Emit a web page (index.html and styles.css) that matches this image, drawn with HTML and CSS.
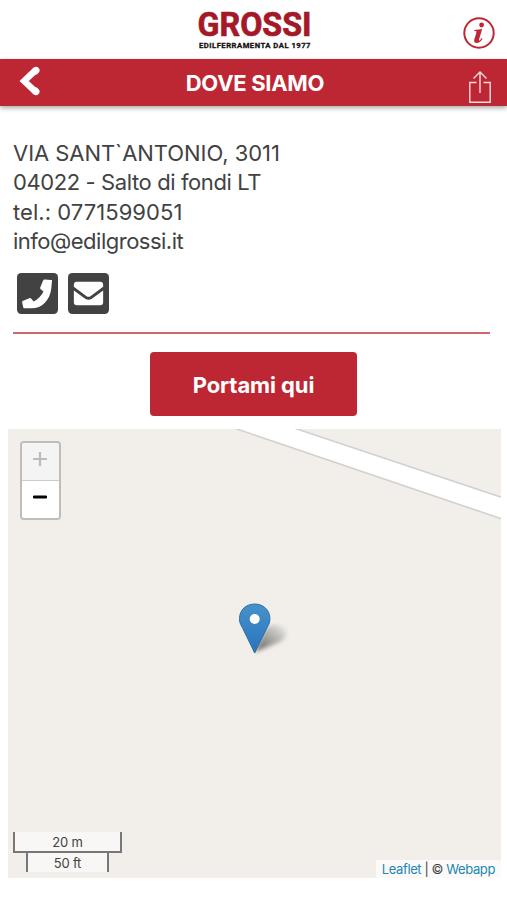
FILE: index.html
```html
<!DOCTYPE html>
<html lang="it">
<head>
    <meta charset="UTF-8">
    <meta name="viewport" content="width=device-width, initial-scale=1.0">
    <title>Dove siamo</title>
    <link rel="stylesheet" href="styles.css">
</head>
<body>
    <header class="header">
        <svg class="logo" width="120" height="56" viewBox="0 0 120 56">
            <text class="logo-name" x="3.5" y="36" textLength="114" lengthAdjust="spacingAndGlyphs">GROSSI</text>
            <text class="logo-sub" x="5" y="47.7" textLength="112" lengthAdjust="spacingAndGlyphs">EDILFERRAMENTA DAL 1977</text>
        </svg>
        <a class="info" href="#">
            <svg width="32" height="32" viewBox="0 0 32 32">
                <circle cx="16" cy="16" r="14.7" fill="none" stroke="#bd2733" stroke-width="2"/>
                <circle cx="18.6" cy="8" r="2.4" fill="#bd2733"/>
                <path d="M11.4 12.9L19.2 12L16 22.5Q15.6 24 16.8 23.3Q17.8 22.6 18.8 21L19.6 21.7Q16.7 26 13.7 26Q10.5 25.9 11.3 22.4L13.4 15.4Q13.8 14.1 12.5 14.1L11.2 14.1Z" fill="#bd2733"/>
            </svg>
        </a>
    </header>
    <nav class="bar">
        <a class="back" href="#">
            <svg width="24" height="32" viewBox="0 0 24 32">
                <path d="M17.9 4.9L6.2 16L17.9 27.1" fill="none" stroke="#fff" stroke-width="6.4" stroke-linejoin="miter"/>
                <path d="M18 5.4L17 6.3M18 26.6L17 25.7" stroke="#fff" stroke-width="7" stroke-linecap="round"/>
            </svg>
        </a>
        <h1 class="title">DOVE SIAMO</h1>
        <a class="share" href="#">
            <svg width="24" height="34" viewBox="0 0 24 34">
                <path d="M8.5 12.5H1.8V32.2H22.2V12.5H15.5M12 23V2M5.5 8.5L12 2L18.5 8.5" fill="none" stroke="#f9dcdc" stroke-width="1.4"/>
            </svg>
        </a>
    </nav>
    <main class="content">
        <address class="address">
            <span class="street">VIA SANT`ANTONIO, 3011</span>
            <span class="city">04022 - Salto di fondi LT</span>
            <span class="tel">tel.: 0771599051</span>
            <span class="mail">info@edilgrossi.it</span>
        </address>
        <div class="contacts">
            <a href="#">
                <svg width="41" height="41" viewBox="0 0 448 448">
                    <rect width="448" height="448" rx="46" fill="#424242"/>
                    <path d="M383 80L375 166C361 295 273 386 160 386L88 386C76 386 70 382 68 373L57 325C55 315 58 309 68 304L135 276C143 272 151 275 156 281L182 312C227 290 269 248 290 203L259 177C253 171 251 164 255 156L284 84C288 74 295 69 304 70L371 76C379 76 384 75 383 80Z" fill="#fff"/>
                </svg>
            </a>
            <a href="#">
                <svg width="41" height="41" viewBox="0 0 448 448">
                    <rect width="448" height="448" rx="46" fill="#424242"/>
                    <path d="M96 96H352Q384 96 384 128V151L245 253Q224 268 203 253L64 151V128Q64 96 96 96ZM64 190L188 281Q224 304 260 281L384 190V320Q384 352 352 352H96Q64 352 64 320Z" fill="#fff"/>
                </svg>
            </a>
        </div>
        <hr class="line">
        <a class="button" href="#">Portami qui</a>
    </main>
    <div class="map">
        <svg class="tiles" width="493" height="449" viewBox="0 0 493 449">
            <path d="M226 -1L494 90V68L286 -1Z" fill="#fff"/>
            <path d="M226 -1Q310 27 494 90M286 -1L494 68.5" fill="none" stroke="#d2d1cf" stroke-width="1.6"/>
        </svg>
        <svg class="marker" width="54" height="54" viewBox="0 0 54 54">
            <defs>
                <linearGradient id="pin" x1="0" y1="0" x2="0" y2="1">
                    <stop offset="0" stop-color="#4693cb"/>
                    <stop offset="1" stop-color="#2873bd"/>
                </linearGradient>
                <linearGradient id="shade" x1="0" y1="1" x2="1" y2="0">
                    <stop offset="0" stop-color="#000" stop-opacity=".6"/>
                    <stop offset="1" stop-color="#000" stop-opacity="0"/>
                </linearGradient>
                <filter id="soft" x="-30%" y="-30%" width="160%" height="160%">
                    <feGaussianBlur stdDeviation="2"/>
                </filter>
            </defs>
            <path d="M17 50L27 27Q37 19 46 26Q52 33 42 40Z" fill="url(#shade)" filter="url(#soft)"/>
            <path d="M16.7 51L4.3 25.5C1.5 21 1.5 18.5 1.5 16.5C1.5 8 8.2 2 16.7 2S31.9 8 31.9 16.5C31.9 18.5 31.9 21 29.1 25.5Z" fill="url(#pin)" stroke="#2d70a4" stroke-width="1"/>
            <circle cx="16.7" cy="17" r="5" fill="#fff"/>
        </svg>
        <div class="zoom">
            <a class="zoom-in" href="#">
                <svg width="14" height="14" viewBox="0 0 14 14"><path d="M0 7H14M7 0V14" stroke="#bbb" stroke-width="2.2"/></svg>
            </a>
            <a class="zoom-out" href="#">
                <svg width="14" height="14" viewBox="0 0 14 14"><path d="M1 7H13" stroke="#000" stroke-width="2.8" stroke-linecap="round"/></svg>
            </a>
        </div>
        <div class="scale">
            <div class="scale-line metric">20 m</div>
            <div class="scale-line imperial">50 ft</div>
        </div>
        <div class="attribution"><a href="#">Leaflet</a> | © <a href="#">Webapp</a></div>
    </div>
</body>
</html>
```
FILE: styles.css
```css
* {
    box-sizing: border-box;
}
body {
    margin: 0;
    background: #fff;
    color: #424242;
    font-family: Inter, "Liberation Sans", sans-serif;
}
a {
    text-decoration: none;
}
svg {
    display: block;
}
.header {
    height: 59px;
    padding: 0 12px;
    display: grid;
    grid-template-columns: 32px 1fr 32px;
}
.logo {
    grid-column: 2;
    justify-self: center;
}
.logo-name {
    font-family: Roboto, sans-serif;
    font-size: 34px;
    font-weight: bold;
    fill: #a51827;
    stroke: #a51827;
    stroke-width: 0.7px;
}
.logo-sub {
    font-family: Roboto, sans-serif;
    font-size: 7.8px;
    font-weight: bold;
    letter-spacing: 0.5px;
    fill: #111;
    stroke: #111;
    stroke-width: 0.3px;
}
.info {
    margin-top: 17px;
}
.bar {
    height: 47px;
    padding: 0 15px 0 18px;
    display: grid;
    grid-template-columns: 24px 1fr 24px;
    align-items: center;
    background: #bd2733;
    box-shadow: 0 2px 5px rgba(0, 0, 0, 0.35);
}
.back {
    margin-top: -5px;
}
.share {
    margin-top: 6px;
}
.title {
    margin: 0;
    color: #fff;
    font-size: 22px;
    font-weight: 700;
    letter-spacing: -0.3px;
    line-height: 49px;
    text-align: center;
}
.content {
    padding: 33px 17px 0 13px;
    display: flex;
    flex-direction: column;
}
.address {
    display: flex;
    flex-direction: column;
    align-items: flex-start;
    font-size: 22px;
    font-style: normal;
    line-height: 29.3px;
    letter-spacing: -0.4px;
}
.street {
    letter-spacing: -0.05px;
}
.tel {
    letter-spacing: 0.05px;
}
.mail {
    letter-spacing: -0.5px;
}
.contacts {
    display: flex;
    gap: 10px;
    padding: 17px 0 0 4px;
}
.line {
    width: 100%;
    height: 2px;
    margin: 18px 0;
    border: 0;
    background: #d3656d;
}
.button {
    width: 207px;
    height: 64px;
    margin-left: 137px;
    border-radius: 4px;
    background: #bd2733;
    color: #fff;
    font-size: 22px;
    font-weight: 700;
    letter-spacing: -0.1px;
    line-height: 66px;
    text-align: center;
}
.map {
    position: relative;
    height: 449px;
    margin: 13px 6px 0 8px;
    overflow: hidden;
    background: #f2efea;
}
.marker {
    position: absolute;
    left: 230px;
    top: 173px;
}
.zoom {
    position: absolute;
    left: 12px;
    top: 12px;
    width: 41px;
    border: 2px solid #bfbdba;
    border-radius: 4px;
    overflow: hidden;
}
.zoom a {
    height: 37px;
    padding: 0 1px 5px 0;
    display: flex;
    align-items: center;
    justify-content: center;
    background: #fff;
}
.zoom .zoom-in {
    height: 38px;
    border-bottom: 1px solid #ccc;
    background: #f4f4f4;
}
.scale {
    position: absolute;
    left: 5px;
    bottom: 6px;
    font-size: 13px;
    letter-spacing: -0.2px;
    text-align: center;
}
.scale-line {
    border: 2px solid #777;
    background: rgba(255, 255, 255, 0.5);
}
.metric {
    width: 109px;
    height: 21px;
    border-top: 0;
    line-height: 21px;
}
.imperial {
    width: 83px;
    height: 19px;
    margin-left: 13px;
    border-top: 0;
    border-bottom: 0;
    line-height: 21px;
}
.attribution {
    position: absolute;
    right: 0;
    bottom: 0;
    padding: 0 6px;
    background: rgba(255, 255, 255, 0.7);
    font-size: 13px;
    letter-spacing: -0.4px;
    line-height: 18px;
}
.attribution a {
    color: #2287b3;
}
```
